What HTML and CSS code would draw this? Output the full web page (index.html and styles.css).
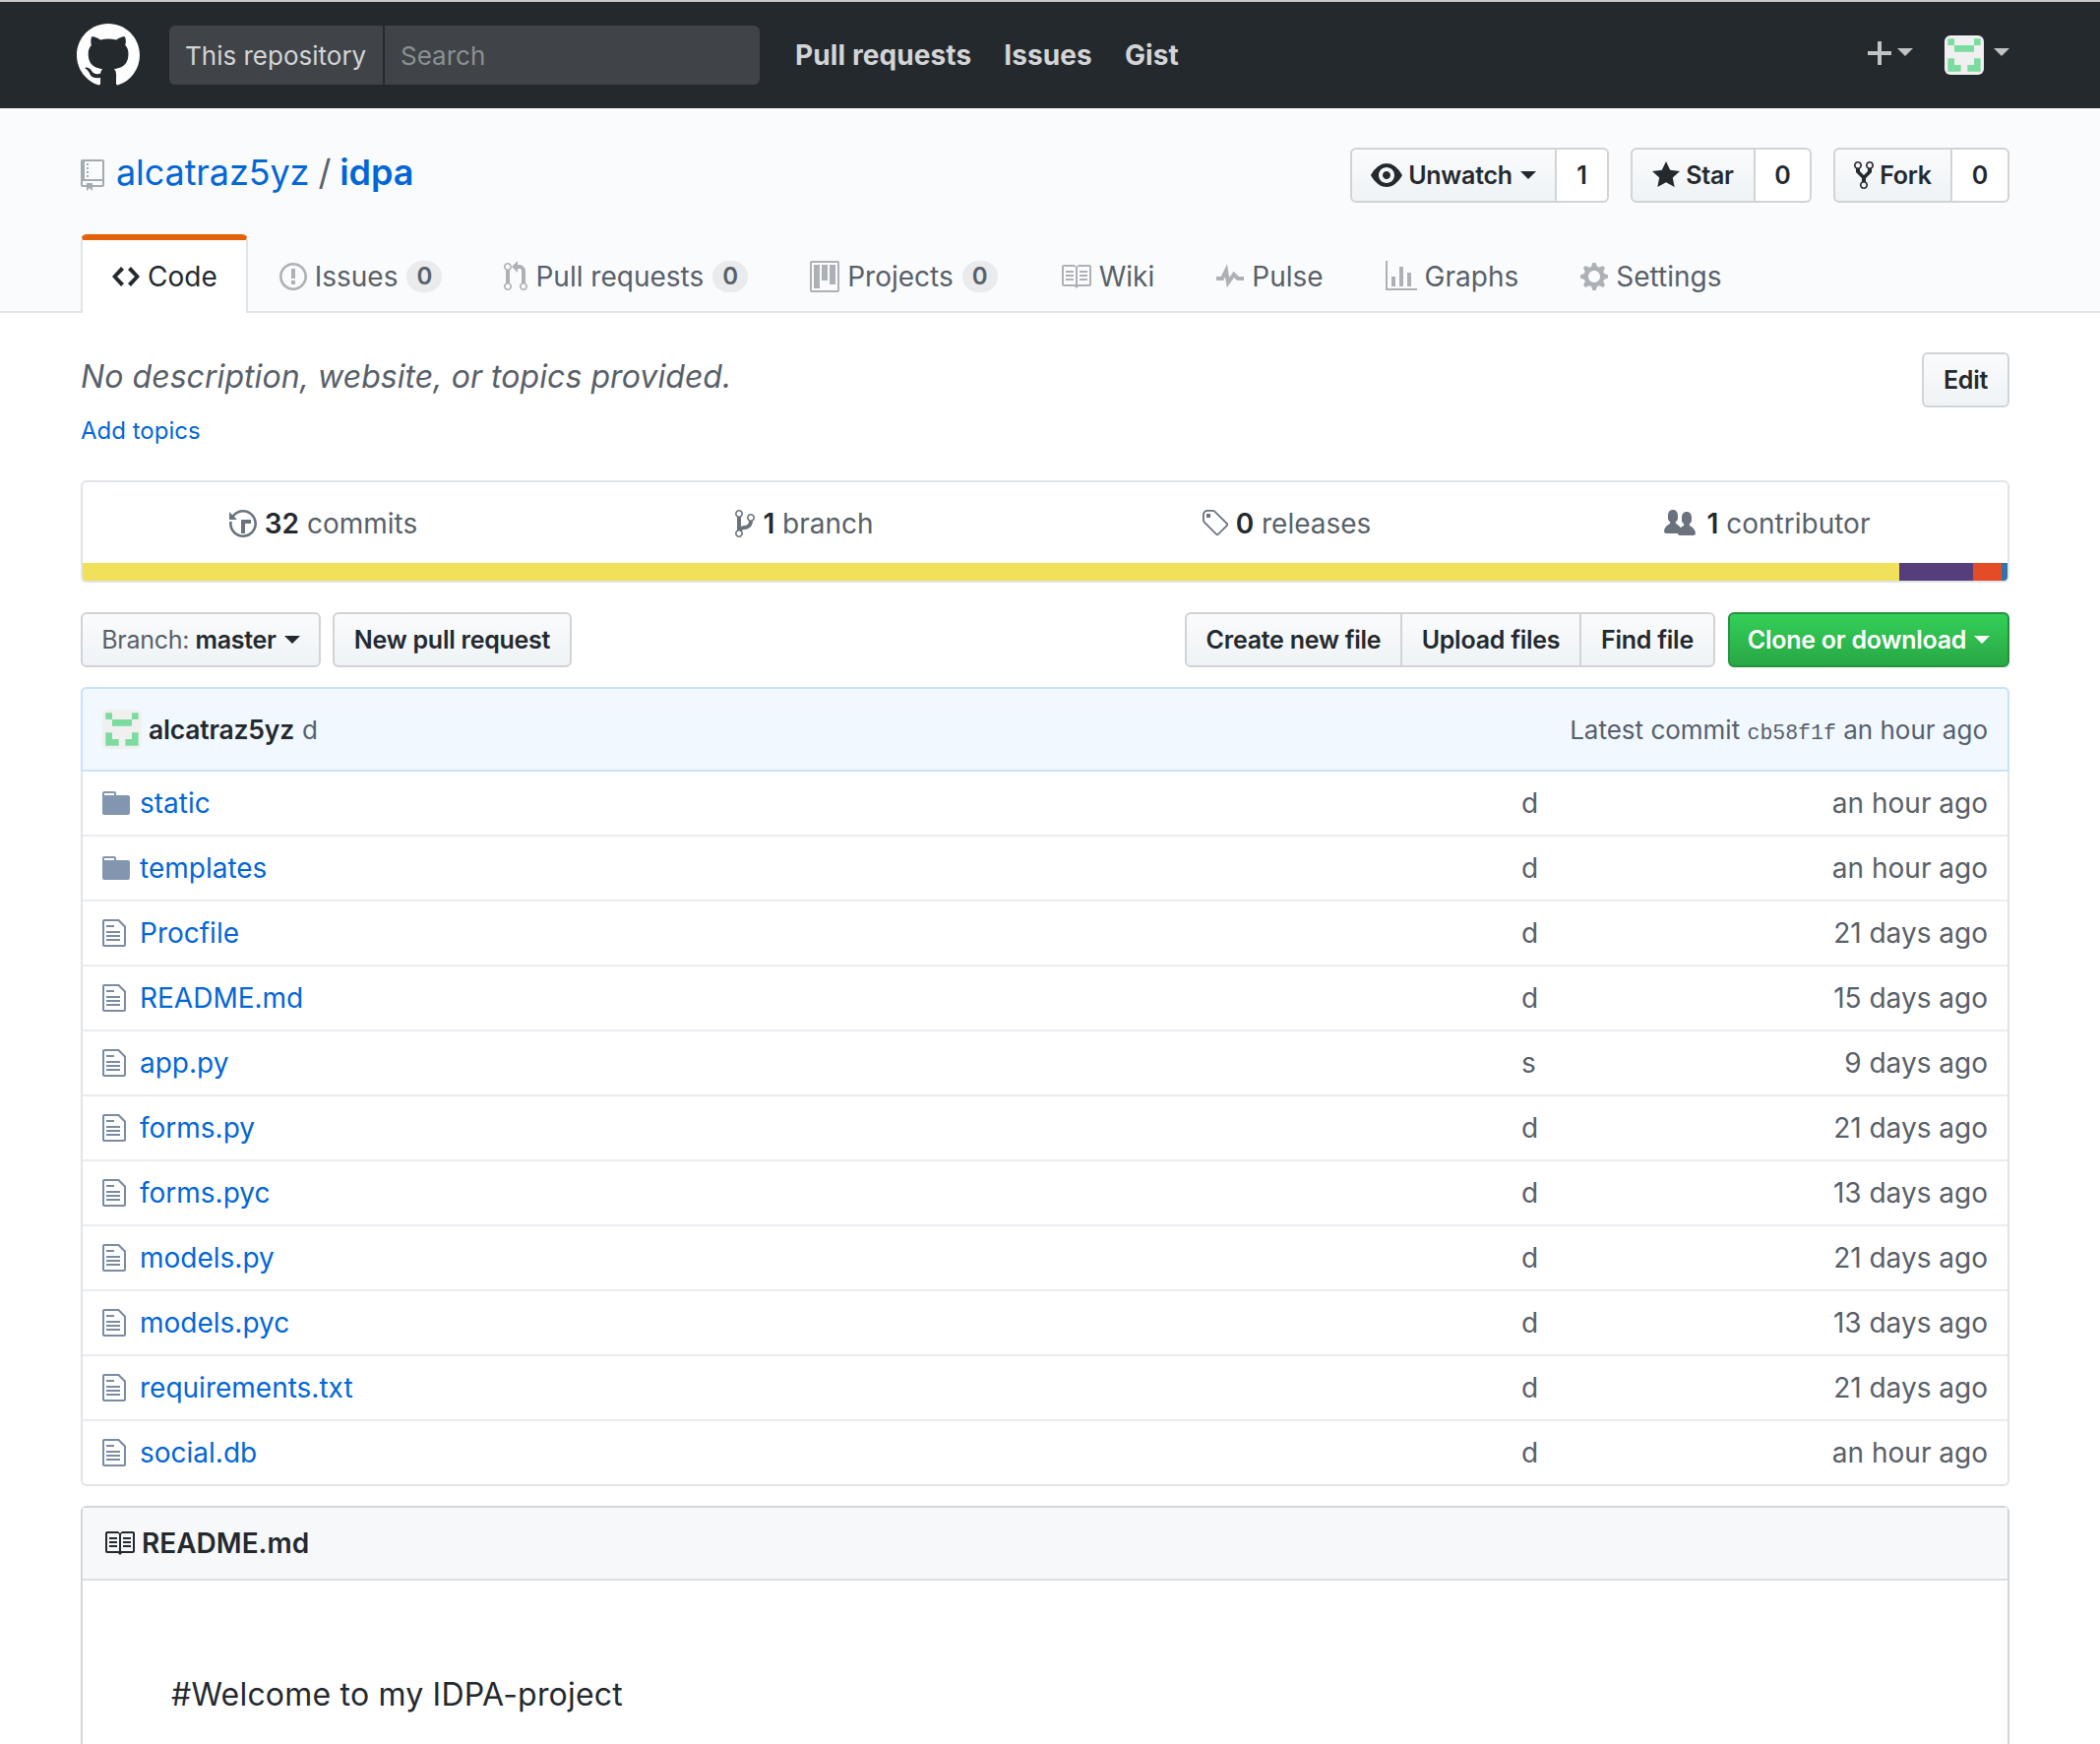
FILE: index.html
```html
<!DOCTYPE html>
<html lang="en">

<head>
    <meta charset="UTF-8">
    <title>alcatraz5yz/idpa</title>
    <link rel="stylesheet" href="styles.css">
</head>

<body>
    <svg class="sprite" xmlns="http://www.w3.org/2000/svg">
        <symbol id="i-mark" viewBox="0 0 16 16"><path d="M8 0C3.58 0 0 3.58 0 8c0 3.54 2.29 6.53 5.47 7.59.4.07.55-.17.55-.38 0-.19-.01-.82-.01-1.49-2.01.37-2.53-.49-2.69-.94-.09-.23-.48-.94-.82-1.13-.28-.15-.68-.52-.01-.53.63-.01 1.08.58 1.23.82.72 1.21 1.87.87 2.33.66.07-.52.28-.87.51-1.07-1.78-.2-3.64-.89-3.64-3.95 0-.87.31-1.59.82-2.15-.08-.2-.36-1.02.08-2.12 0 0 .67-.21 2.2.82.64-.18 1.32-.27 2-.27.68 0 1.36.09 2 .27 1.53-1.04 2.2-.82 2.2-.82.44 1.1.16 1.92.08 2.12.51.56.82 1.27.82 2.15 0 3.07-1.87 3.75-3.65 3.95.29.25.54.73.54 1.48 0 1.07-.01 1.93-.01 2.2 0 .21.15.46.55.38A8.013 8.013 0 0 0 16 8c0-4.42-3.58-8-8-8z"/></symbol>
        <symbol id="i-repo" viewBox="0 0 12 16"><path d="M4 9H3V8h1v1zm0-3H3v1h1V6zm0-2H3v1h1V4zm0-2H3v1h1V2zm8-1v12c0 .55-.45 1-1 1H6v2l-1.5-1.5L3 16v-2H1c-.55 0-1-.45-1-1V1c0-.55.45-1 1-1h10c.55 0 1 .45 1 1zm-1 10H1v2h2v-1h3v1h5v-2zm0-10H2v9h9V1z"/></symbol>
        <symbol id="i-code" viewBox="0 0 14 16"><path d="M9.5 3L8 4.5 11.5 8 8 11.5 9.5 13 14 8 9.5 3zm-5 0L0 8l4.5 5L6 11.5 2.5 8 6 4.5 4.5 3z"/></symbol>
        <symbol id="i-issue" viewBox="0 0 14 16"><path d="M7 2.3c3.14 0 5.7 2.56 5.7 5.7s-2.56 5.7-5.7 5.7A5.71 5.71 0 0 1 1.3 8c0-3.14 2.56-5.7 5.7-5.7zM7 1C3.14 1 0 4.14 0 8s3.14 7 7 7 7-3.14 7-7-3.14-7-7-7zm1 3H6v5h2V4zm0 6H6v2h2v-2z"/></symbol>
        <symbol id="i-pr" viewBox="0 0 12 16"><path d="M11 11.28V5c-.03-.78-.34-1.47-.94-2.06C9.46 2.35 8.78 2.03 8 2H7V0L4 3l3 3V4h1c.27.02.48.11.69.31.21.2.3.42.31.69v6.28A1.993 1.993 0 0 0 10 15a1.993 1.993 0 0 0 1-3.72zm-1 2.92c-.66 0-1.2-.55-1.2-1.2 0-.65.55-1.2 1.2-1.2.65 0 1.2.55 1.2 1.2 0 .65-.55 1.2-1.2 1.2zM4 3c0-1.11-.89-2-2-2a1.993 1.993 0 0 0-1 3.72v6.56A1.993 1.993 0 0 0 2 15a1.993 1.993 0 0 0 1-3.72V4.72c.59-.34 1-.98 1-1.72zm-.8 10c0 .66-.55 1.2-1.2 1.2-.65 0-1.2-.55-1.2-1.2 0-.65.55-1.2 1.2-1.2.65 0 1.2.55 1.2 1.2zM2 4.2C1.34 4.2.8 3.65.8 3c0-.65.55-1.2 1.2-1.2.65 0 1.2.55 1.2 1.2 0 .65-.55 1.2-1.2 1.2z"/></symbol>
        <symbol id="i-project" viewBox="0 0 15 16"><path fill-rule="evenodd" d="M10 12h3V2h-3v10zm-4-2h3V2H6v8zm-4 4h3V2H2v12zm-1 1h13V1H1v14zM14 0H1a1 1 0 0 0-1 1v14a1 1 0 0 0 1 1h13a1 1 0 0 0 1-1V1a1 1 0 0 0-1-1z"/></symbol>
        <symbol id="i-book" viewBox="0 0 16 16"><path d="M3 5h4v1H3V5zm0 3h4V7H3v1zm0 2h4V9H3v1zm11-5h-4v1h4V5zm0 2h-4v1h4V7zm0 2h-4v1h4V9zm2-6v9c0 .55-.45 1-1 1H9.5l-1 1-1-1H2c-.55 0-1-.45-1-1V3c0-.55.45-1 1-1h5.5l1 1 1-1H15c.55 0 1 .45 1 1zm-8 .5L7.5 3H2v9h6V3.5zm7-.5H9.5l-.5.5V12h6V3z"/></symbol>
        <symbol id="i-pulse" viewBox="0 0 14 16"><path d="M11.5 8L8.8 5.4 6.6 8.5 5.5 1.6 2.38 8H0v2h3.6l.9-1.8.9 5.4L9 8.5l1.6 1.5H14V8h-2.5z"/></symbol>
        <symbol id="i-graph" viewBox="0 0 16 16"><path d="M16 14v1H0V0h1v14h15zM5 13H3V8h2v5zm4 0H7V3h2v10zm4 0h-2V6h2v7z"/></symbol>
        <symbol id="i-gear" viewBox="0 0 14 16"><path d="M14 8.77v-1.6l-1.94-.64-.45-1.09.88-1.84-1.13-1.13-1.81.91-1.09-.45-.69-1.92h-1.6l-.63 1.94-1.11.45-1.84-.88-1.13 1.13.91 1.81-.45 1.09L0 7.23v1.59l1.94.64.45 1.09-.88 1.84 1.13 1.13 1.81-.91 1.09.45.69 1.92h1.59l.63-1.94 1.11-.45 1.84.88 1.13-1.13-.92-1.81.47-1.09L14 8.75v.02zM7 11c-1.66 0-3-1.34-3-3s1.34-3 3-3 3 1.34 3 3-1.34 3-3 3z"/></symbol>
        <symbol id="i-eye" viewBox="0 0 16 16"><path d="M8.06 2C3 2 0 8 0 8s3 6 8.06 6C13 14 16 8 16 8s-3-6-7.94-6zM8 12c-2.2 0-4-1.78-4-4 0-2.2 1.8-4 4-4 2.22 0 4 1.8 4 4 0 2.22-1.78 4-4 4zm2-4c0 1.11-.89 2-2 2-1.11 0-2-.89-2-2 0-1.11.89-2 2-2 1.11 0 2 .89 2 2z"/></symbol>
        <symbol id="i-star" viewBox="0 0 14 16"><path d="M14 6l-4.9-.64L7 1 4.9 5.36 0 6l3.6 3.26L2.67 14 7 11.67 11.33 14l-.93-4.74z"/></symbol>
        <symbol id="i-fork" viewBox="0 0 10 16"><path d="M8 1a1.993 1.993 0 0 0-1 3.72V6L5 8 3 6V4.72A1.993 1.993 0 0 0 2 1a1.993 1.993 0 0 0-1 3.72V6.5l3 3v1.78A1.993 1.993 0 0 0 5 15a1.993 1.993 0 0 0 1-3.72V9.5l3-3V4.72A1.993 1.993 0 0 0 8 1zM2 4.2C1.34 4.2.8 3.65.8 3c0-.65.55-1.2 1.2-1.2.65 0 1.2.55 1.2 1.2 0 .65-.55 1.2-1.2 1.2zm3 10c-.66 0-1.2-.55-1.2-1.2 0-.65.55-1.2 1.2-1.2.65 0 1.2.55 1.2 1.2 0 .65-.55 1.2-1.2 1.2zm3-10c-.66 0-1.2-.55-1.2-1.2 0-.65.55-1.2 1.2-1.2.65 0 1.2.55 1.2 1.2 0 .65-.55 1.2-1.2 1.2z"/></symbol>
        <symbol id="i-history" viewBox="0 0 14 16"><path d="M8 13H6V6h5v2H8v5zM7 1C4.81 1 2.87 2.02 1.59 3.59L0 2v4h4L2.5 4.5C3.55 3.17 5.17 2.3 7 2.3c3.14 0 5.7 2.56 5.7 5.7s-2.56 5.7-5.7 5.7A5.71 5.71 0 0 1 1.3 8c0-.34.03-.67.09-1H.08C.03 7.33 0 7.66 0 8c0 3.86 3.14 7 7 7s7-3.14 7-7-3.14-7-7-7z"/></symbol>
        <symbol id="i-branch" viewBox="0 0 10 16"><path d="M10 5c0-1.11-.89-2-2-2a1.993 1.993 0 0 0-1 3.72v.3c-.02.52-.23.98-.63 1.38-.4.4-.86.61-1.38.63-.83.02-1.48.16-2 .45V4.72a1.993 1.993 0 0 0-1-3.72C.88 1 0 1.89 0 3a2 2 0 0 0 1 1.72v6.56c-.59.35-1 .99-1 1.72 0 1.11.89 2 2 2 1.11 0 2-.89 2-2 0-.53-.2-1-.53-1.36.09-.06.48-.41.59-.47.25-.11.56-.17.94-.17 1.05-.05 1.95-.45 2.75-1.25S8.95 7.77 9 6.73h-.02C9.59 6.37 10 5.73 10 5zM2 1.8c.66 0 1.2.55 1.2 1.2 0 .65-.55 1.2-1.2 1.2C1.35 4.2.8 3.65.8 3c0-.65.55-1.2 1.2-1.2zm0 12.41c-.66 0-1.2-.55-1.2-1.2 0-.65.55-1.2 1.2-1.2.65 0 1.2.55 1.2 1.2 0 .65-.55 1.2-1.2 1.2zm6-8c-.66 0-1.2-.55-1.2-1.2 0-.65.55-1.2 1.2-1.2.65 0 1.2.55 1.2 1.2 0 .65-.55 1.2-1.2 1.2z"/></symbol>
        <symbol id="i-tag" viewBox="0 0 14 16"><path d="M7.73 1.73C7.26 1.26 6.62 1 5.96 1H3.5C2.13 1 1 2.13 1 3.5v2.47c0 .66.27 1.3.73 1.77l6.06 6.06c.39.39 1.02.39 1.41 0l4.59-4.59a.996.996 0 0 0 0-1.41L7.73 1.73zM2.38 7.09c-.31-.3-.47-.7-.47-1.13V3.5c0-.88.72-1.59 1.59-1.59h2.47c.42 0 .83.16 1.13.47l6.14 6.13-4.73 4.73-6.13-6.15zM3.01 3h2v2H3V3h.01z"/></symbol>
        <symbol id="i-org" viewBox="0 0 16 16"><path d="M16 12.999c0 .439-.45 1-1 1H7.995c-.539 0-.994-.447-.995-.999H1c-.54 0-1-.561-1-1 0-2.634 3-4 3-4s.229-.409 0-1c-.841-.621-1.058-.59-1-3 .058-2.419 1.367-3 2.5-3s2.442.58 2.5 3c.058 2.41-.159 2.379-1 3-.229.59 0 1 0 1s1.549.711 2.42 2.088C9.196 9.369 10 8.999 10 8.999s.229-.409 0-1c-.841-.62-1.058-.59-1-3 .058-2.419 1.367-3 2.5-3s2.437.581 2.495 3c.059 2.41-.158 2.38-1 3-.229.59 0 1 0 1s3.005 1.366 3.005 4z"/></symbol>
        <symbol id="i-dir" viewBox="0 0 14 16"><path d="M13 4H7V3c0-.66-.31-1-1-1H1c-.55 0-1 .45-1 1v10c0 .55.45 1 1 1h12c.55 0 1-.45 1-1V5c0-.55-.45-1-1-1zM6 4H1V3h5v1z"/></symbol>
        <symbol id="i-file" viewBox="0 0 12 16"><path d="M6 5H2V4h4v1zM2 8h7V7H2v1zm0 2h7V9H2v1zm0 2h7v-1H2v1zm10-7.5V14c0 .55-.45 1-1 1H1c-.55 0-1-.45-1-1V2c0-.55.45-1 1-1h7.5L12 4.5zM11 5L8 2H1v12h10V5z"/></symbol>
        <symbol id="i-plus" viewBox="0 0 12 16"><path d="M12 9H7v5H5V9H0V7h5V2h2v5h5z"/></symbol>
        <symbol id="i-avatar" viewBox="0 0 120 120">
            <rect width="120" height="120" fill="#f0f0f0"/>
            <path fill="#7bdc9f" d="M10 10h20v20H10zM90 10h20v20H90zM30 30h60v20H30zM10 70h20v20h20v20H10zM90 70h20v40H70V90h20z"/>
        </symbol>
    </svg>

    <header class="topbar">
        <svg class="topbar-logo"><use href="#i-mark"/></svg>
        <div class="search">
            <span class="search-scope">This repository</span>
            <span class="search-input">Search</span>
        </div>
        <nav class="topbar-nav">
            <a>Pull requests</a>
            <a>Issues</a>
            <a>Gist</a>
        </nav>
        <div class="topbar-user">
            <svg class="topbar-plus"><use href="#i-plus"/></svg>
            <span class="caret caret-nav"></span>
            <svg class="topbar-avatar"><use href="#i-avatar"/></svg>
            <span class="caret caret-nav"></span>
        </div>
    </header>

    <section class="pagehead">
        <div class="container">
            <div class="pagehead-top">
                <h1 class="repo-title">
                    <svg class="repo-icon"><use href="#i-repo"/></svg>
                    <a>alcatraz5yz</a>
                    <span class="repo-slash">/</span>
                    <a class="repo-name">idpa</a>
                </h1>
                <div class="social">
                    <div class="social-group">
                        <span class="btn social-btn btn-watch"><svg class="ic-eye"><use href="#i-eye"/></svg>Unwatch<span class="caret"></span></span>
                        <span class="social-count count-watch">1</span>
                    </div>
                    <div class="social-group">
                        <span class="btn social-btn btn-star"><svg class="ic-star"><use href="#i-star"/></svg>Star</span>
                        <span class="social-count count-star">0</span>
                    </div>
                    <div class="social-group">
                        <span class="btn social-btn btn-fork"><svg class="ic-fork"><use href="#i-fork"/></svg>Fork</span>
                        <span class="social-count count-fork">0</span>
                    </div>
                </div>
            </div>
            <nav class="tabs">
                <a class="tab active"><svg class="w28"><use href="#i-code"/></svg>Code</a>
                <a class="tab"><svg class="w28"><use href="#i-issue"/></svg>Issues<span class="counter">0</span></a>
                <a class="tab"><svg class="w24"><use href="#i-pr"/></svg>Pull requests<span class="counter">0</span></a>
                <a class="tab"><svg class="w30"><use href="#i-project"/></svg>Projects<span class="counter">0</span></a>
                <a class="tab"><svg class="w32"><use href="#i-book"/></svg>Wiki</a>
                <a class="tab"><svg class="w28"><use href="#i-pulse"/></svg>Pulse</a>
                <a class="tab"><svg class="w32"><use href="#i-graph"/></svg>Graphs</a>
                <a class="tab"><svg class="w28"><use href="#i-gear"/></svg>Settings</a>
            </nav>
        </div>
    </section>

    <main class="container">
        <div class="description">
            <em>No description, website, or topics provided.</em>
            <span class="btn btn-edit">Edit</span>
        </div>
        <a class="add-topics">Add topics</a>

        <div class="summary">
            <div class="stats">
                <div class="stat"><svg class="w28"><use href="#i-history"/></svg><b>32</b> commits</div>
                <div class="stat"><svg class="w20"><use href="#i-branch"/></svg><b>1</b> branch</div>
                <div class="stat"><svg class="w28"><use href="#i-tag"/></svg><b>0</b> releases</div>
                <div class="stat stat-people"><svg class="w32"><use href="#i-org"/></svg><b>1</b> contributor</div>
            </div>
            <div class="langbar">
                <span class="lang-js" style="width:94.4%"></span>
                <span class="lang-css" style="width:3.8%"></span>
                <span class="lang-html" style="width:1.5%"></span>
                <span class="lang-py" style="width:0.3%"></span>
            </div>
        </div>

        <div class="file-nav">
            <span class="btn btn-branch"><span class="muted">Branch:</span>&nbsp;master<span class="caret"></span></span>
            <span class="btn btn-newpr">New pull request</span>
            <div class="file-actions">
                <div class="btn-group">
                    <span class="btn btn-create">Create new file</span>
                    <span class="btn btn-upload">Upload files</span>
                    <span class="btn btn-find">Find file</span>
                </div>
                <span class="btn btn-green">Clone or download<span class="caret"></span></span>
            </div>
        </div>

        <div class="files">
            <div class="tease">
                <svg class="tease-avatar"><use href="#i-avatar"/></svg>
                <b>alcatraz5yz</b>
                <span class="tease-msg">d</span>
                <span class="tease-right">Latest commit <code>cb58f1f</code> an hour ago</span>
            </div>
            <div class="row"><svg class="ic-dir"><use href="#i-dir"/></svg><a>static</a><span>d</span><span class="age">an hour ago</span></div>
            <div class="row"><svg class="ic-dir"><use href="#i-dir"/></svg><a>templates</a><span>d</span><span class="age">an hour ago</span></div>
            <div class="row"><svg class="ic-file"><use href="#i-file"/></svg><a>Procfile</a><span>d</span><span class="age">21 days ago</span></div>
            <div class="row"><svg class="ic-file"><use href="#i-file"/></svg><a>README.md</a><span>d</span><span class="age">15 days ago</span></div>
            <div class="row"><svg class="ic-file"><use href="#i-file"/></svg><a>app.py</a><span>s</span><span class="age">9 days ago</span></div>
            <div class="row"><svg class="ic-file"><use href="#i-file"/></svg><a>forms.py</a><span>d</span><span class="age">21 days ago</span></div>
            <div class="row"><svg class="ic-file"><use href="#i-file"/></svg><a>forms.pyc</a><span>d</span><span class="age">13 days ago</span></div>
            <div class="row"><svg class="ic-file"><use href="#i-file"/></svg><a>models.py</a><span>d</span><span class="age">21 days ago</span></div>
            <div class="row"><svg class="ic-file"><use href="#i-file"/></svg><a>models.pyc</a><span>d</span><span class="age">13 days ago</span></div>
            <div class="row"><svg class="ic-file"><use href="#i-file"/></svg><a>requirements.txt</a><span>d</span><span class="age">21 days ago</span></div>
            <div class="row"><svg class="ic-file"><use href="#i-file"/></svg><a>social.db</a><span>d</span><span class="age">an hour ago</span></div>
        </div>

        <div class="readme">
            <h3 class="readme-head"><svg class="ic-book"><use href="#i-book"/></svg>README.md</h3>
            <p class="readme-body">#Welcome to my IDPA-project</p>
        </div>
    </main>
</body>

</html>
```

FILE: styles.css
```css
html,
body {
    height: 1772px;
    overflow: hidden;
}

body {
    margin: 0;
    background: #fff;
    color: #24292e;
    font-family: "Inter", "Liberation Sans", sans-serif;
    font-size: 28px;
}

a {
    color: #0366d6;
}

svg {
    fill: currentColor;
    height: 32px;
    flex: none;
}

.sprite {
    display: none;
}

.container {
    width: 1960px;
    margin-left: 82px;
}

.w20 { width: 20px; }
.w24 { width: 24px; }
.w28 { width: 28px; }
.w30 { width: 30px; }
.w32 { width: 32px; }

.caret {
    display: inline-block;
    width: 0;
    height: 0;
    margin-left: 8px;
    border-top: 8px solid currentColor;
    border-left: 8px solid transparent;
    border-right: 8px solid transparent;
}

/* top bar */
.topbar {
    display: flex;
    align-items: center;
    height: 108px;
    border-top: 2px solid #c8c8c8;
    padding-left: 78px;
    background: #24292e;
}

.topbar-logo {
    width: 64px;
    height: 64px;
    color: #fff;
}

.search {
    display: flex;
    width: 600px;
    height: 60px;
    margin-left: 30px;
    border-radius: 6px;
    background: #404448;
    font-size: 26px;
    line-height: 62px;
}

.search-scope {
    width: 219px;
    padding-left: 16px;
    box-sizing: border-box;
    border-right: 2px solid #24292e;
    color: #d3d4d5;
}

.search-input {
    padding-left: 16px;
    color: #8c8f91;
}

.topbar-nav {
    display: flex;
    gap: 33px;
    margin-left: 36px;
    font-weight: 700;
    letter-spacing: 0.1px;
}

.topbar-nav a {
    color: #d3d4d5;
}

.topbar-user {
    display: flex;
    align-items: center;
    margin-left: auto;
    margin-right: 92px;
    color: #c0c2c3;
}

.topbar-plus {
    width: 24px;
    height: 32px;
    margin-top: -4px;
}

.caret-nav {
    margin-left: 6px;
    margin-top: -6px;
}

.topbar-avatar {
    width: 40px;
    height: 40px;
    margin-left: 32px;
    border-radius: 6px;
    margin-right: 4px;
}

/* repo head */
.pagehead {
    height: 206px;
    border-bottom: 2px solid #e1e4e8;
    background: #fafbfc;
}

.pagehead-top {
    display: flex;
    justify-content: space-between;
    align-items: center;
    padding-top: 40px;
    height: 56px;
}

.repo-title {
    display: flex;
    align-items: center;
    margin: -6px 0 0;
    font-size: 36px;
    font-weight: 400;
    letter-spacing: -0.1px;
    color: #586069;
}

.repo-icon {
    width: 24px;
    margin-right: 12px;
    margin-top: 6px;
    color: #a3aab1;
}

.repo-slash {
    margin: 0 9px;
}

.repo-name {
    font-weight: 600;
}

.btn {
    display: inline-flex;
    align-items: center;
    justify-content: center;
    box-sizing: border-box;
    height: 56px;
    border: 2px solid #d1d3d5;
    border-radius: 6px;
    background: linear-gradient(#fafbfc, #eff3f6);
    font-size: 25px;
    font-weight: 600;
    letter-spacing: -0.25px;
    white-space: nowrap;
}

.social {
    display: flex;
    gap: 22px;
}

.social-group {
    display: flex;
}

.social-btn {
    border-radius: 6px 0 0 6px;
}

.btn-watch { width: 210px; }
.btn-star { width: 127px; }
.btn-fork { width: 121px; }

.ic-eye {
    width: 32px;
    margin-right: 6px;
}

.ic-star {
    width: 28px;
    margin-right: 6px;
}

.ic-fork {
    width: 20px;
    margin-right: 6px;
}

.social-count {
    display: flex;
    align-items: center;
    justify-content: center;
    box-sizing: border-box;
    height: 56px;
    border: 2px solid #d1d3d5;
    border-left: 0;
    border-radius: 0 6px 6px 0;
    background: #fff;
    font-size: 25px;
    font-weight: 600;
}

.count-watch { width: 53px; }
.count-star { width: 57px; }
.count-fork { width: 58px; }

.tabs {
    display: flex;
    margin-top: 32px;
}

.tab {
    display: flex;
    align-items: center;
    box-sizing: border-box;
    height: 80px;
    padding: 4px 29px 0 30px;
    border: 2px solid transparent;
    border-bottom: 0;
    color: #586069;
}

.tab svg {
    margin-right: 8px;
    color: #adb1b6;
}

.tab.active {
    border-color: #e1e4e8;
    border-top: 6px solid #e36209;
    border-radius: 6px 6px 0 0;
    padding-top: 0;
    background: #fff;
    color: #24292e;
}

.tab.active svg {
    color: #24292e;
}

.counter {
    width: 36px;
    margin-left: 9px;
    border-radius: 20px;
    background: #eaebec;
    font-size: 24px;
    font-weight: 600;
    line-height: 32px;
    text-align: center;
}

/* description */
.description {
    display: flex;
    justify-content: space-between;
    margin-top: 40px;
    color: #586069;
    font-size: 32px;
    letter-spacing: 0.06px;
    line-height: 50px;
}

.btn-edit {
    width: 89px;
    color: #24292e;
}

.add-topics {
    display: block;
    margin-top: 6px;
    margin-bottom: 32px;
    font-size: 24px;
    line-height: 36px;
}

/* numbers summary */
.summary {
    border: 2px solid #e1e4e8;
    border-radius: 6px;
    overflow: hidden;
}

.stats {
    display: flex;
    box-sizing: border-box;
    height: 82px;
    padding-top: 2px;
    color: #586069;
}

.stat {
    flex: 1;
    display: flex;
    align-items: center;
    justify-content: center;
    white-space: pre;
}

.stat svg {
    margin-right: 8px;
    color: #6a737d;
}

.stat-people svg {
    margin-right: 12px;
}

.stat b {
    color: #24292e;
    font-weight: 600;
}

.langbar {
    display: flex;
    height: 18px;
}

.lang-js { background: #f1e05a; }
.lang-css { background: #563d7c; }
.lang-html { background: #e34c26; }
.lang-py { background: #3572a5; }

/* branch row */
.file-nav {
    display: flex;
    gap: 12px;
    margin-top: 30px;
}

.btn-branch { width: 244px; }
.btn-newpr { width: 243px; }

.muted {
    color: #586069;
    font-weight: 400;
}

.file-actions {
    display: flex;
    gap: 13px;
    margin-left: auto;
}

.btn-group {
    display: flex;
}

.btn-group .btn {
    border-radius: 0;
    margin-left: -2px;
}

.btn-group .btn:first-child {
    border-radius: 6px 0 0 6px;
    margin-left: 0;
}

.btn-group .btn:last-child {
    border-radius: 0 6px 6px 0;
}

.btn-create { width: 221px; }
.btn-upload { width: 184px; }
.btn-find { width: 138px; }

.btn-green {
    width: 286px;
    border-color: #25923e;
    background: linear-gradient(#34d058, #28a745);
    color: #fff;
}

/* file list */
.files {
    margin-top: 20px;
    border: 2px solid #e1e4e8;
    border-top: 0;
    border-radius: 6px;
}

.tease {
    display: flex;
    align-items: center;
    height: 82px;
    margin: 0 -2px;
    padding: 0 20px;
    border: 2px solid #c8e1ff;
    border-radius: 6px 6px 0 0;
    background: #f1f8ff;
    color: #586069;
    font-size: 26px;
}

.tease-avatar {
    width: 40px;
    height: 40px;
    margin-right: 7px;
    border-radius: 6px;
}

.tease b {
    color: #24292e;
    font-size: 26.5px;
    font-weight: 600;
    letter-spacing: -0.2px;
}

.tease-msg {
    margin-left: 8px;
}

.tease-right {
    margin-left: auto;
}

.tease code {
    font-family: "Liberation Mono", monospace;
    font-size: 21.5px;
}

.row {
    display: grid;
    grid-template-columns: 38px 1404px 1fr auto;
    align-items: center;
    box-sizing: border-box;
    height: 66px;
    padding: 0 20px;
    border-top: 2px solid #eaecef;
    color: #586069;
}

.tease + .row {
    height: 64px;
    border-top: 0;
}

.ic-dir {
    width: 28px;
    color: #8296af;
}

.ic-file {
    width: 24px;
    color: #7a8ba3;
}

/* readme */
.readme {
    margin-top: 20px;
    height: 600px;
    border: 2px solid #d1d5da;
    border-radius: 6px;
}

.readme-head {
    display: flex;
    align-items: center;
    height: 72px;
    margin: 0;
    padding-left: 21px;
    border-bottom: 2px solid #dcdee0;
    background: #f6f8fa;
    font-size: 28px;
    font-weight: 600;
}

.ic-book {
    width: 32px;
    margin-right: 7px;
}

.readme-body {
    margin: 92px 0 0 90px;
    font-size: 32px;
    letter-spacing: 0.2px;
    line-height: 48px;
}
```
